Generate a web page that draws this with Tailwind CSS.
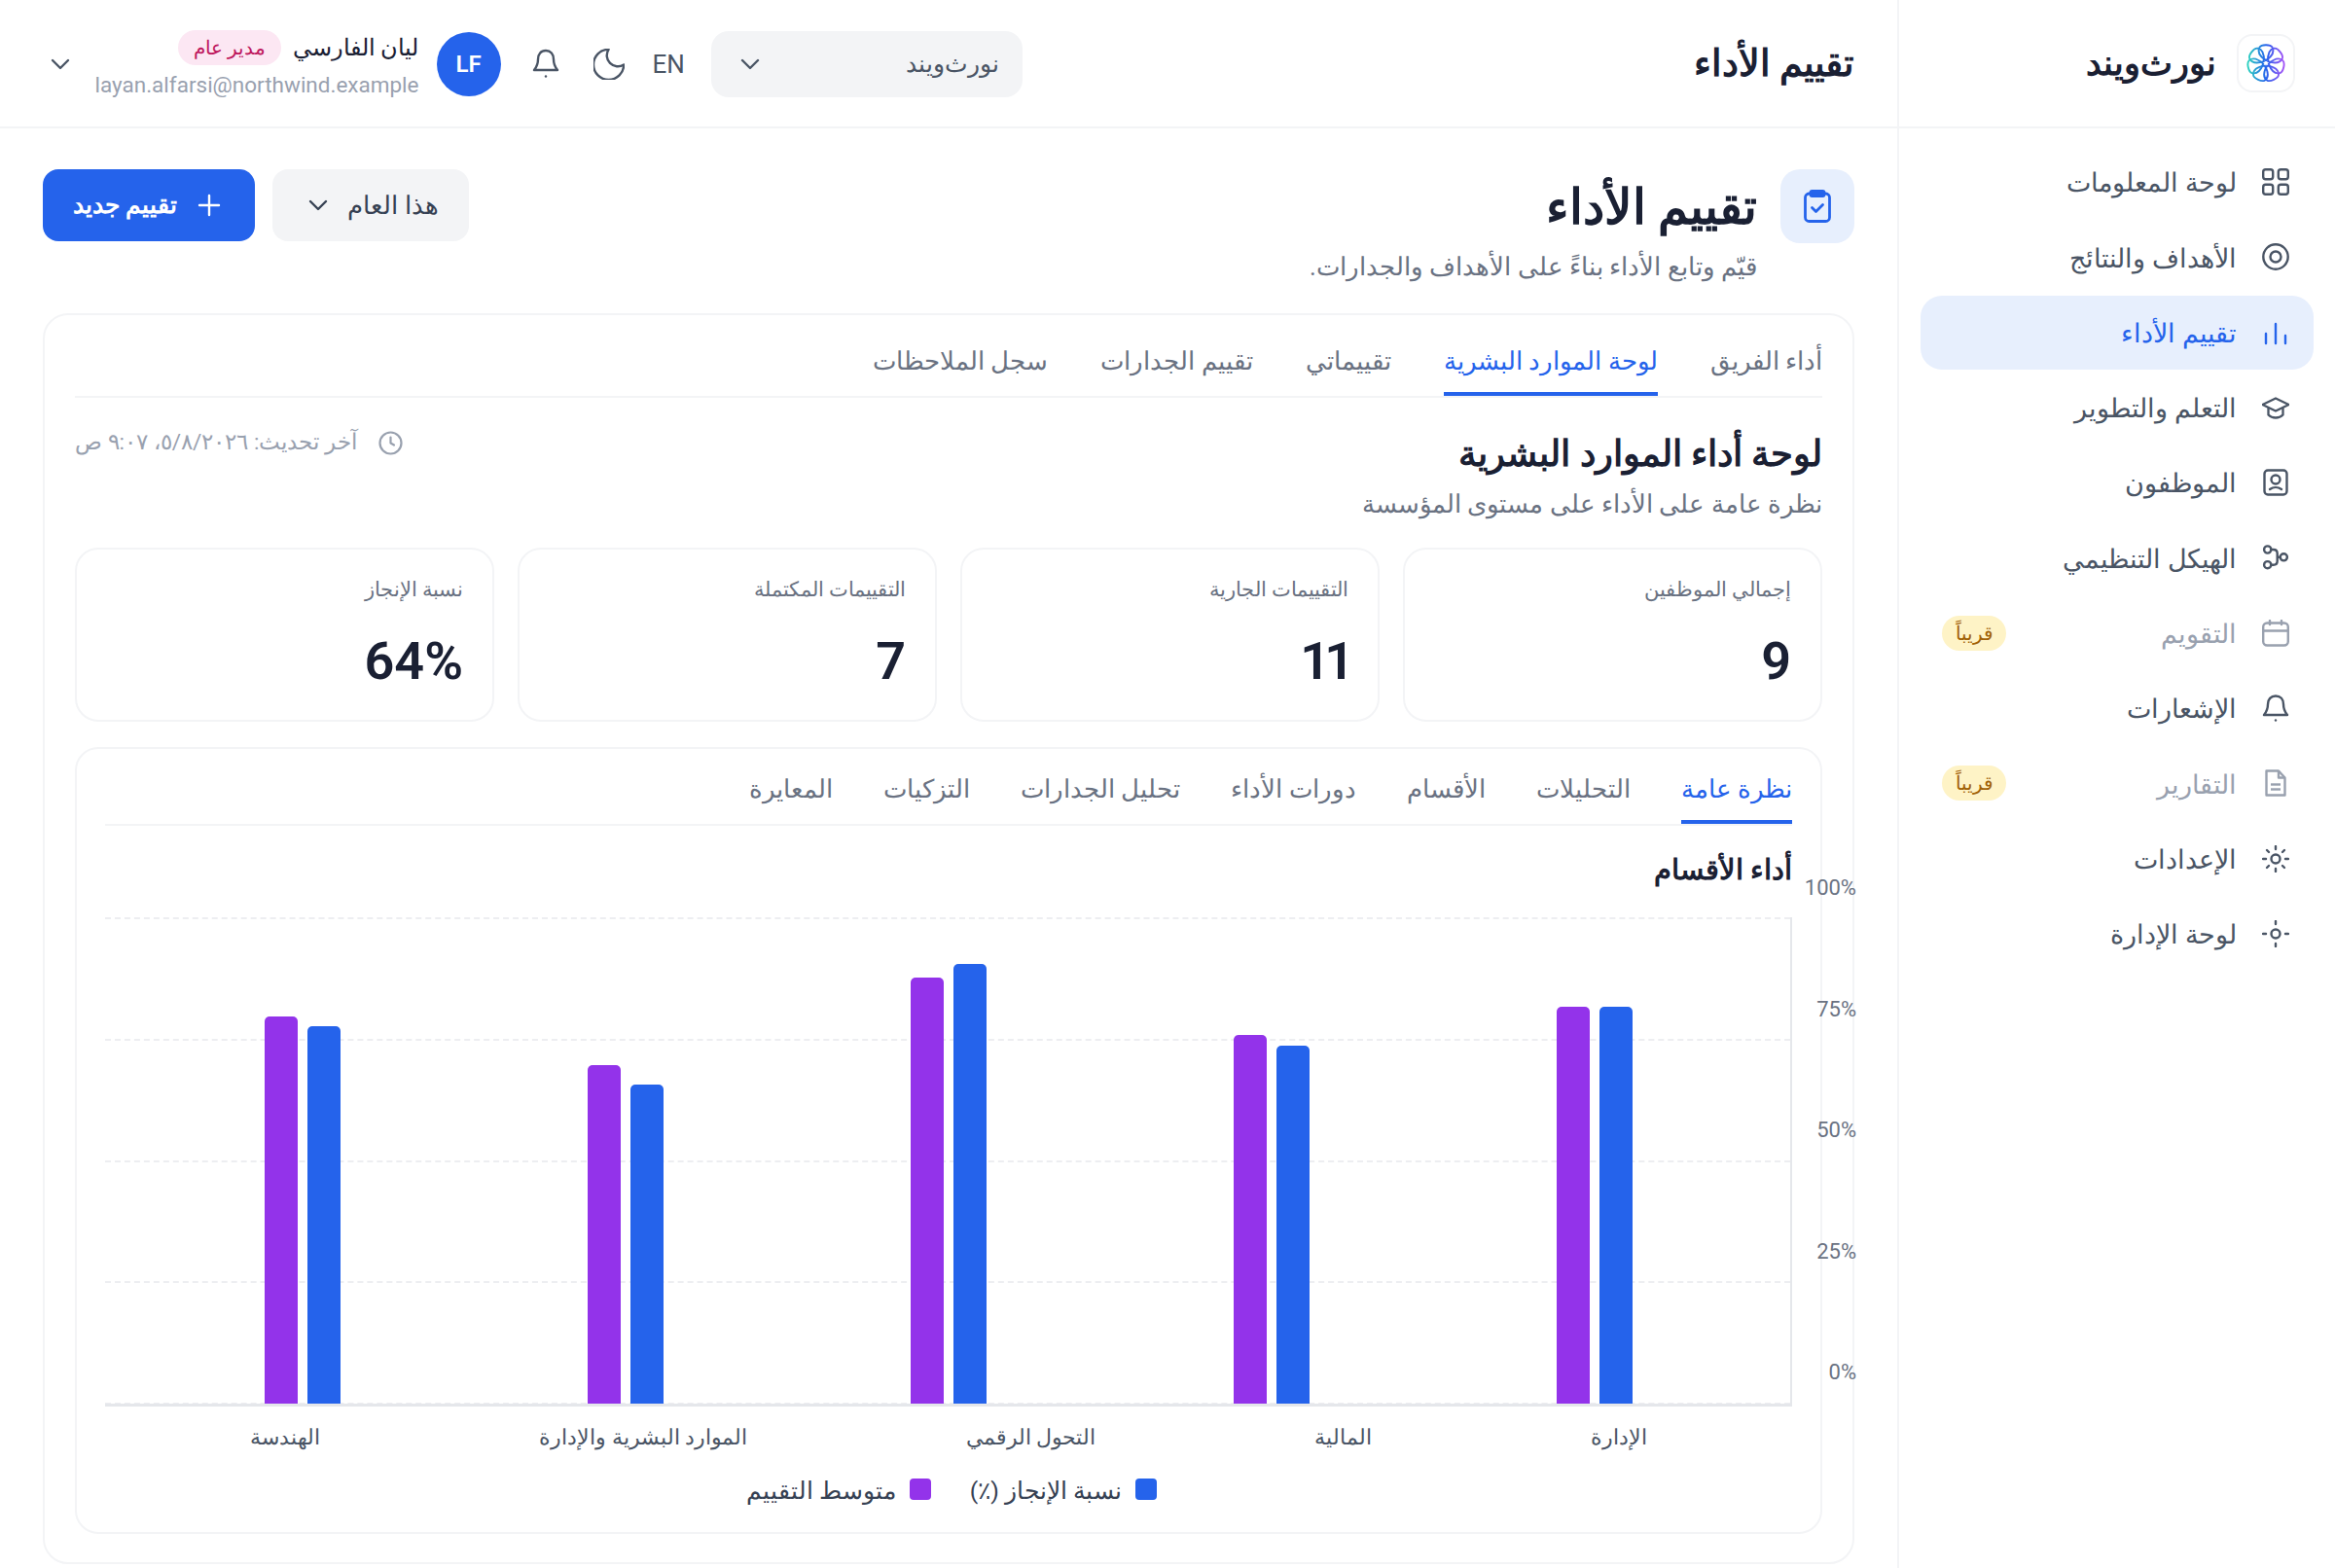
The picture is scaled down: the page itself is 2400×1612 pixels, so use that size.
<!DOCTYPE html>
<html lang="ar" dir="rtl">
<head>
  <meta charset="UTF-8" />
  <title>تقييم الأداء - نورث ويند</title>
  <script src="https://cdn.jsdelivr.net/npm/@tailwindcss/browser@4"></script>
</head>
<body class="bg-white text-[#1a2033] font-['Roboto','Noto_Sans',sans-serif]">
<div class="flex h-[1612px] w-[2400px] overflow-hidden">

  <!-- Sidebar -->
  <aside class="w-[450px] shrink-0 border-e-2 border-gray-100">
    <div class="h-[132px] border-b-2 border-gray-100 flex items-center gap-[21px] pr-[41px]">
      <div class="w-[60px] h-[60px] rounded-[16px] border-2 border-gray-100 flex items-center justify-center">
        <svg width="40" height="40" viewBox="-21 -21 42 42" fill="none">
          <defs>
            <linearGradient id="logoGrad" x1="-20" y1="0" x2="20" y2="0" gradientUnits="userSpaceOnUse">
              <stop offset="0" stop-color="#2dd4bf"/><stop offset="0.5" stop-color="#2563eb"/><stop offset="1" stop-color="#a855f7"/>
            </linearGradient>
            <mask id="logoMask" maskUnits="userSpaceOnUse" x="-21" y="-21" width="42" height="42">
              <g stroke="#fff" stroke-width="2" fill="none">
                <path d="M0-3C-6-7-9.500-12-7-17C-5-20.500 5-20.500 7-17C9.500-12 6-7 0-3Z"/>
                <path d="M0-3C-6-7-9.500-12-7-17C-5-20.500 5-20.500 7-17C9.500-12 6-7 0-3Z" transform="rotate(51.400)"/>
                <path d="M0-3C-6-7-9.500-12-7-17C-5-20.500 5-20.500 7-17C9.500-12 6-7 0-3Z" transform="rotate(102.900)"/>
                <path d="M0-3C-6-7-9.500-12-7-17C-5-20.500 5-20.500 7-17C9.500-12 6-7 0-3Z" transform="rotate(154.300)"/>
                <path d="M0-3C-6-7-9.500-12-7-17C-5-20.500 5-20.500 7-17C9.500-12 6-7 0-3Z" transform="rotate(205.700)"/>
                <path d="M0-3C-6-7-9.500-12-7-17C-5-20.500 5-20.500 7-17C9.500-12 6-7 0-3Z" transform="rotate(257.100)"/>
                <path d="M0-3C-6-7-9.500-12-7-17C-5-20.500 5-20.500 7-17C9.500-12 6-7 0-3Z" transform="rotate(308.600)"/>
              </g>
            </mask>
          </defs>
          <rect x="-21" y="-21" width="42" height="42" fill="url(#logoGrad)" mask="url(#logoMask)"/>
        </svg>
      </div>
      <span class="text-[34.500px] font-semibold leading-none">نورث‌ويند</span>
    </div>

    <nav class="pt-[17px] px-[22px] flex flex-col gap-[1.300px] text-[27px] text-gray-600">
      <a class="h-[76px] flex items-center gap-[26px] pr-[25px] rounded-[22px]">
        <svg class="shrink-0" width="28" height="28" viewBox="0 0 28 28" fill="none" stroke="currentColor" stroke-width="2.400"><rect x="1.200" y="1.200" width="10" height="10" rx="2.500"/><rect x="16.800" y="1.200" width="10" height="10" rx="2.500"/><rect x="1.200" y="16.800" width="10" height="10" rx="2.500"/><rect x="16.800" y="16.800" width="10" height="10" rx="2.500"/></svg>
        <span class="mt-[3px]">لوحة المعلومات</span>
      </a>
      <a class="h-[76px] flex items-center gap-[26px] pr-[25px] rounded-[22px]">
        <svg class="shrink-0" width="28" height="28" viewBox="0 0 28 28" fill="none" stroke="currentColor" stroke-width="2.400"><circle cx="14" cy="14" r="12.700"/><circle cx="14" cy="14" r="5.500"/></svg>
        <span class="mt-[3px]">الأهداف والنتائج</span>
      </a>
      <a class="h-[76px] flex items-center gap-[26px] pr-[25px] rounded-[22px] bg-[#e7effd] text-[#2563eb] font-medium">
        <svg class="shrink-0" width="28" height="28" viewBox="0 0 28 28" fill="none" stroke="currentColor" stroke-width="2.400" stroke-linecap="round"><path d="M4 15v10"/><path d="M14 5v20"/><path d="M24 17v8"/></svg>
        <span class="mt-[3px]">تقييم الأداء</span>
      </a>
      <a class="h-[76px] flex items-center gap-[26px] pr-[25px] rounded-[22px]">
        <svg class="shrink-0" width="28" height="28" viewBox="0 0 28 24" fill="none" stroke="currentColor" stroke-width="2.300" stroke-linejoin="round" stroke-linecap="round"><path d="M0.500 9 14 2.500 27.500 9 14 15.500Z"/><path d="M6.500 13v6.500c4 4 11 4 15 0V13"/></svg>
        <span class="mt-[3px]">التعلم والتطوير</span>
      </a>
      <a class="h-[76px] flex items-center gap-[26px] pr-[25px] rounded-[22px]">
        <svg class="shrink-0" width="28" height="28" viewBox="0 0 28 28" fill="none" stroke="currentColor" stroke-width="2.400" stroke-linecap="round"><rect x="2.500" y="1.500" width="23" height="25" rx="3.500"/><circle cx="14" cy="11" r="4.500"/><path d="M8 21c3.500-2.500 8.500-2.500 12 0"/></svg>
        <span class="mt-[3px]">الموظفون</span>
      </a>
      <a class="h-[76px] flex items-center gap-[26px] pr-[25px] rounded-[22px]">
        <svg class="shrink-0" width="28" height="28" viewBox="0 0 28 28" fill="none" stroke="currentColor" stroke-width="2.400"><circle cx="5.700" cy="6" r="3.600"/><circle cx="5.700" cy="21.700" r="3.600"/><circle cx="22.300" cy="13.800" r="3.600"/><path d="M9.300 6h2.400q4 0 4 4v7.700q0 4-4 4H9.300"/><path d="M15.700 13.800h3"/></svg>
        <span class="mt-[3px]">الهيكل التنظيمي</span>
      </a>
      <a class="h-[76px] flex items-center gap-[26px] pr-[25px] rounded-[22px] text-gray-400">
        <svg class="shrink-0" width="28" height="28" viewBox="0 0 28 28" fill="none" stroke="currentColor" stroke-width="2.400" stroke-linecap="round"><rect x="1.200" y="3.500" width="25.600" height="23" rx="4"/><path d="M1.200 11.500h25.600"/><path d="M8 1v4"/><path d="M20 1v4"/></svg>
        <span class="flex-1 mt-[3px]">التقويم</span>
        <span class="ml-[22px] w-[66px] h-[36px] rounded-full bg-amber-100 text-[#a16207] text-[20px] flex items-center justify-center">قريباً</span>
      </a>
      <a class="h-[76px] flex items-center gap-[26px] pr-[25px] rounded-[22px]">
        <svg class="shrink-0" width="28" height="28" viewBox="0 0 28 28" fill="none" stroke="currentColor" stroke-width="2.400" stroke-linecap="round" stroke-linejoin="round"><path d="M14 1.500c-5 0-8 3.500-8 8.500 0 5-1.500 8-4 11h24c-2.500-3-4-6-4-11 0-5-3-8.500-8-8.500Z"/><path d="M14 26.500v.1"/></svg>
        <span class="mt-[3px]">الإشعارات</span>
      </a>
      <a class="h-[76px] flex items-center gap-[26px] pr-[25px] rounded-[22px] text-gray-400">
        <svg class="shrink-0" width="28" height="28" viewBox="0 0 28 28" fill="none" stroke="currentColor" stroke-width="2.400" stroke-linejoin="round"><path d="M4.500 1.500h12.500l6.500 7v18h-19Z"/><path d="M17 1.500v7h6.500"/><path d="M9 15.500h10"/><path d="M9 20.500h10"/></svg>
        <span class="flex-1 mt-[3px]">التقارير</span>
        <span class="ml-[22px] w-[66px] h-[36px] rounded-full bg-amber-100 text-[#a16207] text-[20px] flex items-center justify-center">قريباً</span>
      </a>
      <a class="h-[76px] flex items-center gap-[26px] pr-[25px] rounded-[22px]">
        <svg class="shrink-0" width="28" height="28" viewBox="0 0 28 28" fill="none" stroke="currentColor" stroke-width="2.400" stroke-linecap="round"><circle cx="14" cy="14" r="4.500"/><path d="M14 1v3"/><path d="M14 24v3"/><path d="M1 14h3"/><path d="M24 14h3"/><path d="m5 5 2 2"/><path d="m21 21 2 2"/><path d="m5 23 2-2"/><path d="m21 7 2-2"/></svg>
        <span class="mt-[3px]">الإعدادات</span>
      </a>
      <a class="h-[76px] flex items-center gap-[26px] pr-[25px] rounded-[22px]">
        <svg class="shrink-0" width="28" height="28" viewBox="0 0 28 28" fill="none" stroke="currentColor" stroke-width="2.400" stroke-linecap="round"><circle cx="14" cy="14" r="4.500"/><path d="M14 1v3"/><path d="M14 24v3"/><path d="M1 14h3"/><path d="M24 14h3"/></svg>
        <span class="mt-[3px]">لوحة الإدارة</span>
      </a>
    </nav>
  </aside>

  <!-- Main -->
  <div class="flex-1 min-w-0">
    <header class="h-[132px] border-b-2 border-gray-100 px-[44px] flex items-center justify-between">
      <h1 class="text-[38px] font-semibold leading-none">تقييم الأداء</h1>
      <div class="flex items-center text-gray-600 mt-[2px]">
        <div class="w-[320px] h-[68px] rounded-[18px] bg-gray-100 flex items-center justify-between pr-[24px] pl-[30px] text-[25px]">
          <span>نورث‌ويند</span>
          <svg width="20" height="12" viewBox="0 0 20 12" fill="none" stroke="currentColor" stroke-width="2.400" stroke-linecap="round" stroke-linejoin="round"><path d="m2 2 8 8 8-8"/></svg>
        </div>
        <span class="mr-[27.500px] text-[26px] leading-none">EN</span>
        <svg class="mr-[29px]" width="32" height="32" viewBox="3 3 18.500 18.500" fill="none" stroke="currentColor" stroke-width="1.400" stroke-linecap="round" stroke-linejoin="round"><path d="M12 3.500a6.500 6.500 0 0 0 9 9 9 9 0 1 1-9-9Z"/></svg>
        <svg class="mr-[34.500px]" width="28" height="32" viewBox="0 0 28 32" fill="none" stroke="currentColor" stroke-width="2.400" stroke-linecap="round" stroke-linejoin="round"><path d="M14 2c-5 0-8 3.500-8 9 0 5-1.500 8-4 11h24c-2.500-3-4-6-4-11 0-5.500-3-9-8-9Z"/><path d="M14 28.500v.1"/></svg>
        <div class="mr-[32.500px] w-[66px] h-[66px] rounded-full bg-[#2563eb] text-white text-[24px] font-semibold flex items-center justify-center">LF</div>
        <div class="mr-[18px] w-[333px] mt-[2px]">
          <div class="flex items-center gap-[12px] h-[36px]">
            <span class="text-[23.500px] font-medium text-[#1a2033] mt-[1px]">ليان الفارسي</span>
            <span class="h-[36px] px-[16px] rounded-full bg-[#fce7f3] text-[#be185d] text-[20px] flex items-center">مدير عام</span>
          </div>
          <div class="mt-[4px] text-[22.500px] leading-[32px] text-gray-400 text-right" dir="ltr">layan.alfarsi@northwind.example</div>
        </div>
        <svg class="mr-[26px] ml-[7.500px]" width="20" height="12" viewBox="0 0 20 12" fill="none" stroke="currentColor" stroke-width="2.400" stroke-linecap="round" stroke-linejoin="round"><path d="m2 2 8 8 8-8"/></svg>
      </div>
    </header>

    <main class="px-[44px] pt-[42px]">
      <div class="flex justify-between items-start h-[148px]">
        <div class="flex gap-[24px]">
          <div class="w-[76px] h-[76px] rounded-[20px] bg-[#e7effd] flex items-center justify-center">
            <svg width="28" height="34" viewBox="0 0 28 34" fill="none" stroke="#2563eb" stroke-width="2.800" stroke-linecap="round" stroke-linejoin="round"><rect x="1.500" y="4" width="25" height="28.500" rx="4"/><rect x="7" y="1.500" width="14" height="5" rx="1.500" fill="#2563eb"/><path d="m8.500 18.500 4 4 7-7"/></svg>
          </div>
          <div>
            <h2 class="text-[50px] font-semibold leading-[79px]">تقييم الأداء</h2>
            <p class="text-[25.700px] text-gray-500 leading-[40px] mt-[1px]">قيّم وتابع الأداء بناءً على الأهداف والجدارات.</p>
          </div>
        </div>
        <div class="flex gap-[18px]">
          <button class="w-[202px] h-[74px] rounded-[16px] bg-gray-100 text-gray-700 text-[26px] font-medium flex items-center justify-center gap-[20px] pl-[6px]">
            <span>هذا العام</span>
            <svg width="20" height="12" viewBox="0 0 20 12" fill="none" stroke="currentColor" stroke-width="2.400" stroke-linecap="round" stroke-linejoin="round"><path d="m2 2 8 8 8-8"/></svg>
          </button>
          <button class="w-[218px] h-[74px] rounded-[16px] bg-[#2563eb] text-white text-[25px] font-semibold flex items-center justify-center gap-[21px] pr-[4px]">
            <svg width="24" height="24" viewBox="0 0 24 24" fill="none" stroke="currentColor" stroke-width="2.400" stroke-linecap="round"><path d="M12 2v20"/><path d="M2 12h20"/></svg>
            <span>تقييم جديد</span>
          </button>
        </div>
      </div>

      <section class="h-[1286px] rounded-[26px] border-2 border-gray-100 px-[31px] pt-[22px]">
        <div class="flex gap-[54px] border-b-2 border-gray-100 h-[63px] text-[25.700px] text-gray-500">
          <a class="leading-[50px]">أداء الفريق</a>
          <a class="leading-[50px] h-[61px] border-b-4 border-[#2563eb] text-[#2563eb] font-medium">لوحة الموارد البشرية</a>
          <a class="leading-[50px]">تقييماتي</a>
          <a class="leading-[50px]">تقييم الجدارات</a>
          <a class="leading-[50px]">سجل الملاحظات</a>
        </div>

        <div class="flex justify-between items-start h-[154px] pt-[32px]">
          <div>
            <h3 class="text-[37px] font-semibold leading-[52px]">لوحة أداء الموارد البشرية</h3>
            <p class="text-[25.500px] text-gray-500 leading-[40px] mt-[5px]">نظرة عامة على الأداء على مستوى المؤسسة</p>
          </div>
          <div class="flex items-center gap-[22px] text-[22.600px] text-gray-400 h-[36px] mt-[-4px]">
            <svg width="25" height="25" viewBox="0 0 25 25" fill="none" stroke="currentColor" stroke-width="2.200" stroke-linecap="round" stroke-linejoin="round"><circle cx="12.500" cy="12.500" r="11"/><path d="M12.500 6.500v6l3.500 2"/></svg>
            <span>آخر تحديث: ٥/٨/٢٠٢٦، ٩:٠٧ ص</span>
          </div>
        </div>

        <div class="grid grid-cols-4 gap-[24px]">
          <div class="h-[179px] rounded-[24px] border-2 border-gray-100 px-[30px] pt-[25px]">
            <div class="text-[21px] text-gray-500 leading-[32px]">إجمالي الموظفين</div>
            <div class="text-[54px] font-semibold leading-[60px] mt-[28px] text-right" dir="ltr">9</div>
          </div>
          <div class="h-[179px] rounded-[24px] border-2 border-gray-100 px-[30px] pt-[25px]">
            <div class="text-[21px] text-gray-500 leading-[32px]">التقييمات الجارية</div>
            <div class="text-[54px] font-semibold leading-[60px] mt-[28px] text-right tracking-[-6px]" dir="ltr">11</div>
          </div>
          <div class="h-[179px] rounded-[24px] border-2 border-gray-100 px-[30px] pt-[25px]">
            <div class="text-[21px] text-gray-500 leading-[32px]">التقييمات المكتملة</div>
            <div class="text-[54px] font-semibold leading-[60px] mt-[28px] text-right" dir="ltr">7</div>
          </div>
          <div class="h-[179px] rounded-[24px] border-2 border-gray-100 px-[30px] pt-[25px]">
            <div class="text-[21px] text-gray-500 leading-[32px]">نسبة الإنجاز</div>
            <div class="text-[54px] font-semibold leading-[60px] mt-[28px] text-right" dir="ltr">64%</div>
          </div>
        </div>

        <div class="mt-[26px] h-[809px] rounded-[24px] border-2 border-gray-100 px-[29px] pt-[16px]">
          <div class="flex gap-[52px] border-b-2 border-gray-100 h-[63px] text-[25.700px] text-gray-500">
            <a class="leading-[50px] h-[61px] border-b-4 border-[#2563eb] text-[#2563eb] font-medium">نظرة عامة</a>
            <a class="leading-[50px]">التحليلات</a>
            <a class="leading-[50px]">الأقسام</a>
            <a class="leading-[50px]">دورات الأداء</a>
            <a class="leading-[50px]">تحليل الجدارات</a>
            <a class="leading-[50px]">التزكيات</a>
            <a class="leading-[50px]">المعايرة</a>
          </div>
          <h4 class="text-[28.500px] font-semibold leading-[40px] mt-[26px]">أداء الأقسام</h4>

          <!-- Chart -->
          <div class="relative mt-[28px] h-[503px] border-b-[3px] border-r-2 border-gray-200 pr-[35px] pl-[37px] flex items-end">
            <div class="absolute inset-x-0 top-0 bottom-[-1px] flex flex-col justify-between">
              <div class="border-t-2 border-dashed border-gray-200/70"></div>
              <div class="border-t-2 border-dashed border-gray-200/70"></div>
              <div class="border-t-2 border-dashed border-gray-200/70"></div>
              <div class="border-t-2 border-dashed border-gray-200/70"></div>
              <div class="border-t-2 border-dashed border-gray-200/70"></div>
            </div>
            <div class="absolute left-full ml-[2px] top-[-44px] w-[66px] text-[22px] text-gray-500 text-right" dir="ltr">
              <div class="h-[124.500px] leading-[28px]">100%</div>
              <div class="h-[124.500px] leading-[28px]">75%</div>
              <div class="h-[124.500px] leading-[28px]">50%</div>
              <div class="h-[124.500px] leading-[28px]">25%</div>
              <div class="h-[28px] leading-[28px]">0%</div>
            </div>
            <div class="relative flex-1 flex justify-center items-end gap-[10px]">
              <div class="w-[34px] rounded-t-[5px] bg-[#2563eb]" style="height:408px"></div>
              <div class="w-[34px] rounded-t-[5px] bg-[#9333ea]" style="height:408px"></div>
            </div>
            <div class="relative flex-1 flex justify-center items-end gap-[10px]">
              <div class="w-[34px] rounded-t-[5px] bg-[#2563eb]" style="height:368px"></div>
              <div class="w-[34px] rounded-t-[5px] bg-[#9333ea]" style="height:379px"></div>
            </div>
            <div class="relative flex-1 flex justify-center items-end gap-[10px]">
              <div class="w-[34px] rounded-t-[5px] bg-[#2563eb]" style="height:452px"></div>
              <div class="w-[34px] rounded-t-[5px] bg-[#9333ea]" style="height:438px"></div>
            </div>
            <div class="relative flex-1 flex justify-center items-end gap-[10px]">
              <div class="w-[34px] rounded-t-[5px] bg-[#2563eb]" style="height:328px"></div>
              <div class="w-[34px] rounded-t-[5px] bg-[#9333ea]" style="height:348px"></div>
            </div>
            <div class="relative flex-1 flex justify-center items-end gap-[10px]">
              <div class="w-[34px] rounded-t-[5px] bg-[#2563eb]" style="height:388px"></div>
              <div class="w-[34px] rounded-t-[5px] bg-[#9333ea]" style="height:398px"></div>
            </div>
          </div>
          <div class="px-[37px] mt-[16px] flex justify-around text-[21.600px] text-gray-600 leading-[32px]">
            <span>الإدارة</span>
            <span>المالية</span>
            <span>التحول الرقمي</span>
            <span>الموارد البشرية والإدارة</span>
            <span>الهندسة</span>
          </div>
          <div class="mt-[21px] flex justify-center gap-[40px] pl-[6px] text-[24.800px] text-gray-700 leading-[36px]">
            <div class="flex items-center gap-[14px]"><span class="w-[22px] h-[22px] rounded-[4px] bg-[#2563eb] mt-[-4px]"></span><span>نسبة الإنجاز (٪)</span></div>
            <div class="flex items-center gap-[14px]"><span class="w-[22px] h-[22px] rounded-[4px] bg-[#9333ea] mt-[-4px]"></span><span>متوسط التقييم</span></div>
          </div>
        </div>
      </section>
    </main>
  </div>
</div>
</body>
</html>
